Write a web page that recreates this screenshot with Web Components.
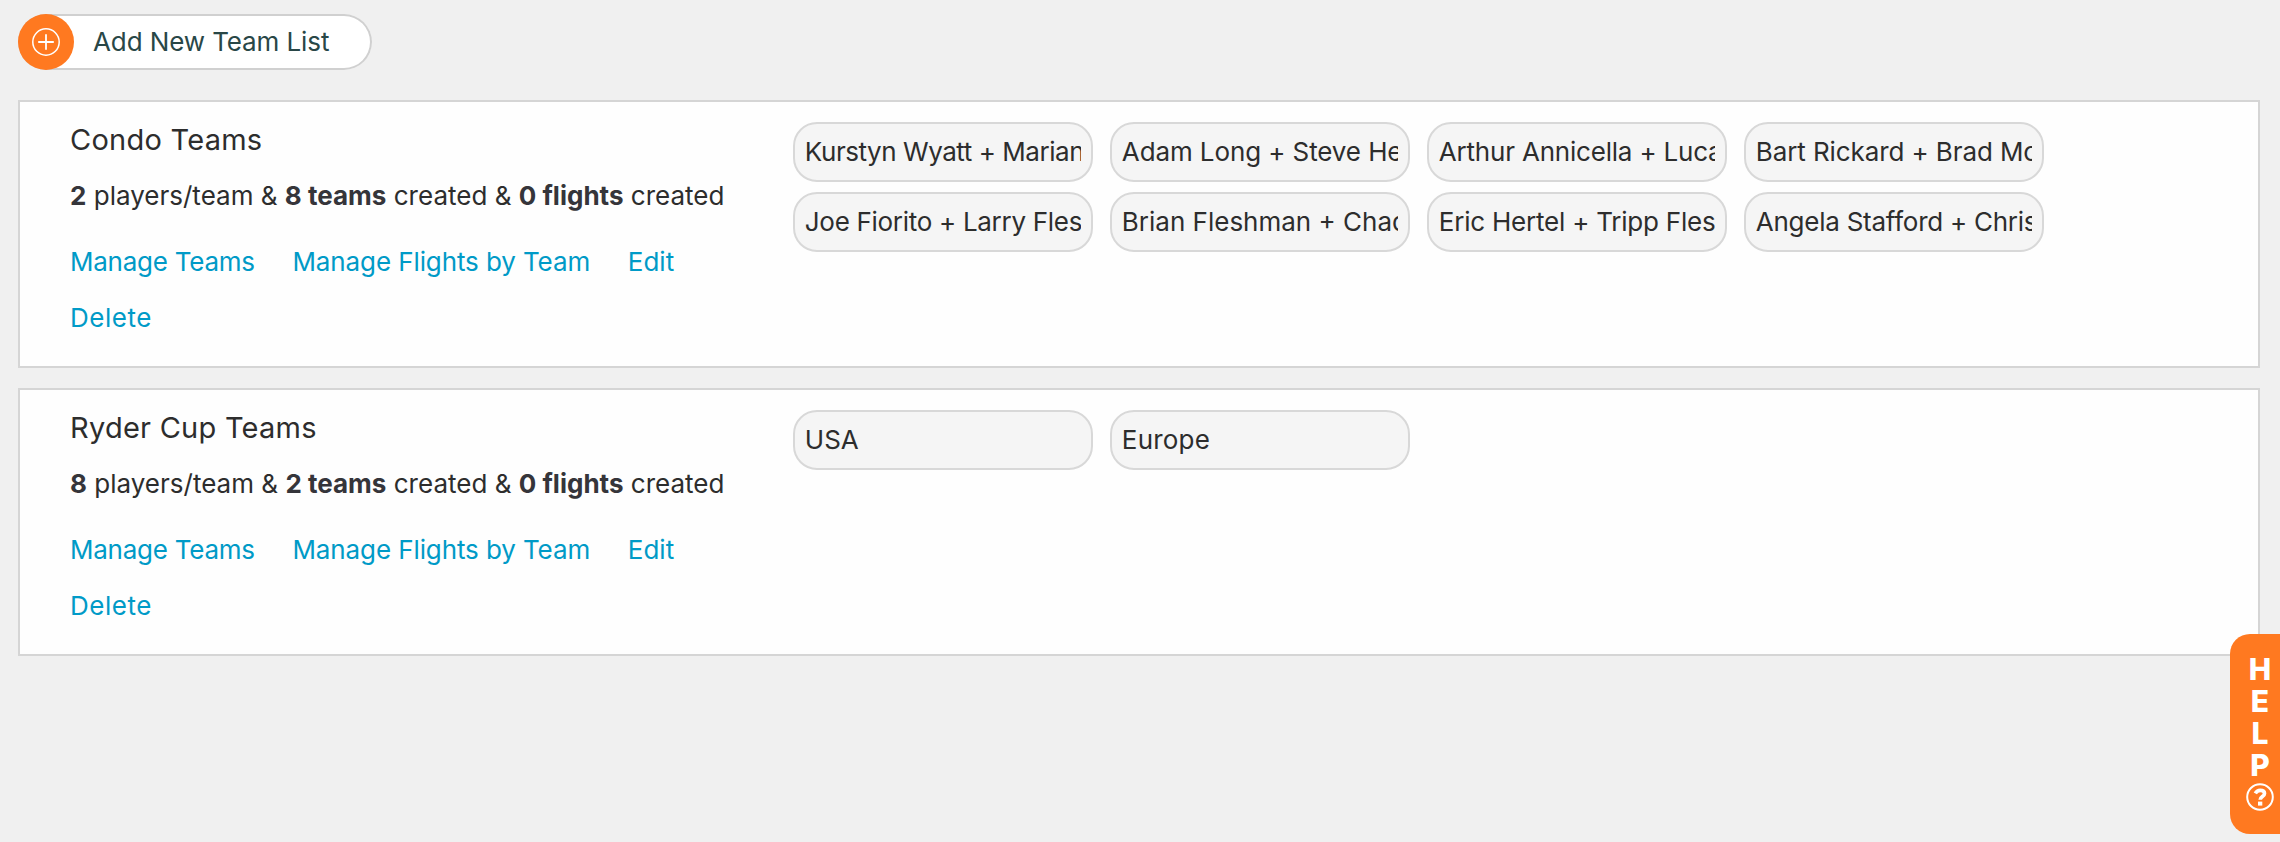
<!DOCTYPE html>
<html lang="en">
<head>
<meta charset="utf-8">
<title>Team Lists</title>
<style>
html,body{margin:0;height:100%;overflow:hidden}
body{background:#f0f0f0;color:#2d2d2d;font:430 26px Inter,"Liberation Sans",sans-serif}
</style>
</head>
<body>
<team-page>
  <add-button>Add New Team List</add-button>
  <team-card>
    <span slot="title">Condo Teams</span>
    <team-stats slot="stats" players="2" teams="8" flights="0"></team-stats>
    <team-chip style="letter-spacing:-.45px">Kurstyn Wyatt + Mariann</team-chip>
    <team-chip style="letter-spacing:-.1px">Adam Long + Steve He</team-chip>
    <team-chip style="letter-spacing:-.2px">Arthur Annicella + Luca</team-chip>
    <team-chip style="letter-spacing:-.1px">Bart Rickard + Brad Mo</team-chip>
    <team-chip style="letter-spacing:-.3px">Joe Fiorito + Larry Fles</team-chip>
    <team-chip>Brian Fleshman + Chad</team-chip>
    <team-chip style="letter-spacing:-.22px">Eric Hertel + Tripp Fles</team-chip>
    <team-chip style="letter-spacing:-.25px">Angela Stafford + Chris</team-chip>
  </team-card>
  <team-card>
    <span slot="title">Ryder Cup Teams</span>
    <team-stats slot="stats" players="8" teams="2" flights="0"></team-stats>
    <team-chip>USA</team-chip>
    <team-chip style="letter-spacing:.2px">Europe</team-chip>
  </team-card>
</team-page>
<help-tab></help-tab>
<script>
const define = (name, html, init) => customElements.define(name, class extends HTMLElement {
  constructor() {
    super();
    this.attachShadow({ mode: 'open' }).innerHTML = html;
  }
  connectedCallback() { if (init) init(this, this.shadowRoot); }
});

define('team-page', `<style>
:host{display:flex;flex-direction:column;align-items:stretch;gap:20px;padding:14px 20px 0 18px;box-sizing:border-box}
::slotted(add-button){align-self:flex-start;margin-bottom:10px}
</style><slot></slot>`);

define('add-button', `<style>
:host{display:flex;align-items:center;box-sizing:border-box;width:354px;height:56px;border-radius:28px;
background:#fff;box-shadow:inset 0 0 0 2px #d0d0d0;color:#294747;letter-spacing:-.1px;cursor:pointer;white-space:nowrap}
i{display:grid;place-items:center;width:56px;height:56px;border-radius:50%;background:#ff7920;margin-right:19px;flex:none}
svg{display:block}
span{padding-bottom:2px}
</style><i><svg width="28" height="28" viewBox="0 0 28 28" fill="none" stroke="#fff"><circle cx="14" cy="14" r="13.2" stroke-width="1.5"/><path d="M14 6.2v15.6M6.2 14h15.6" stroke-width="1.8"/></svg></i><span><slot></slot></span>`);

define('team-stats', `<style>
:host{display:block;line-height:56px;white-space:nowrap;letter-spacing:.01px}
b{font-weight:700;color:#35353a}
</style><b id="p"></b> players/team &amp; <b><span id="t"></span> teams</b> <span>created</span> &amp; <b><span id="f"></span> flights</b> <span>created</span>`,
(el, root) => {
  root.querySelector('#p').textContent = el.getAttribute('players');
  root.querySelector('#t').textContent = el.getAttribute('teams');
  root.querySelector('#f').textContent = el.getAttribute('flights');
});

define('team-card', `<style>
:host{display:grid;grid-template-columns:723px 1fr;box-sizing:border-box;height:268px;border:2px solid #d5d5d5;background:#fefefe}
.info{padding:18px 0 0 50px}
h2{margin:0 0 8px;font-size:29px;font-weight:400;line-height:40px;letter-spacing:.25px}
nav{display:flex;flex-wrap:wrap;column-gap:37.700px;margin-top:10px;line-height:56px;width:665px}
a{color:#009ac7;white-space:nowrap;text-decoration:none}
.chips{display:grid;grid-template-columns:repeat(4,300px);grid-auto-rows:60px;gap:10px 17px;padding:20px 0 0 50px;align-content:start}
</style>
<div class="info"><h2><slot name="title"></slot></h2><slot name="stats"></slot>
<nav><a style="letter-spacing:-.25px">Manage Teams</a><a style="letter-spacing:-.1px">Manage Flights by Team</a><a>Edit</a><a style="letter-spacing:.5px">Delete</a></nav></div>
<div class="chips"><slot></slot></div>`);

define('team-chip', `<style>
:host{display:block;box-sizing:border-box;width:300px;height:60px;padding:0 10px;border:2px solid #d8d8d8;border-radius:24px;background:#f5f5f5}
div{overflow:hidden;white-space:nowrap;line-height:56px;text-indent:-.2px}
</style><div><slot></slot></div>`);

define('help-tab', `<style>
:host{position:fixed;right:0;top:634px;display:flex;flex-direction:column;align-items:center;box-sizing:border-box;width:50px;height:200px;
padding:19px 0 0 10px;border-radius:20px 0 0 20px;background:#ff7920;color:#fff;font-weight:800;font-size:30px;line-height:32px}
svg{display:block;margin-top:2px}
</style><span>H</span><span>E</span><span>L</span><span>P</span>
<svg width="28" height="28" viewBox="0 0 28 28" fill="none" stroke="#fff"><circle cx="14" cy="14" r="12.8" stroke-width="2"/><path d="M9.300 10.400C10.600 8.200 12.100 7.300 14.200 7.300c2.600 0 4.300 1.200 4.300 3.100 0 3.100-4.300 3-4.300 6.300" stroke-width="3.700"/><path d="M12 20.600h4.300" stroke-width="4"/></svg>`);
</script>
</body>
</html>
